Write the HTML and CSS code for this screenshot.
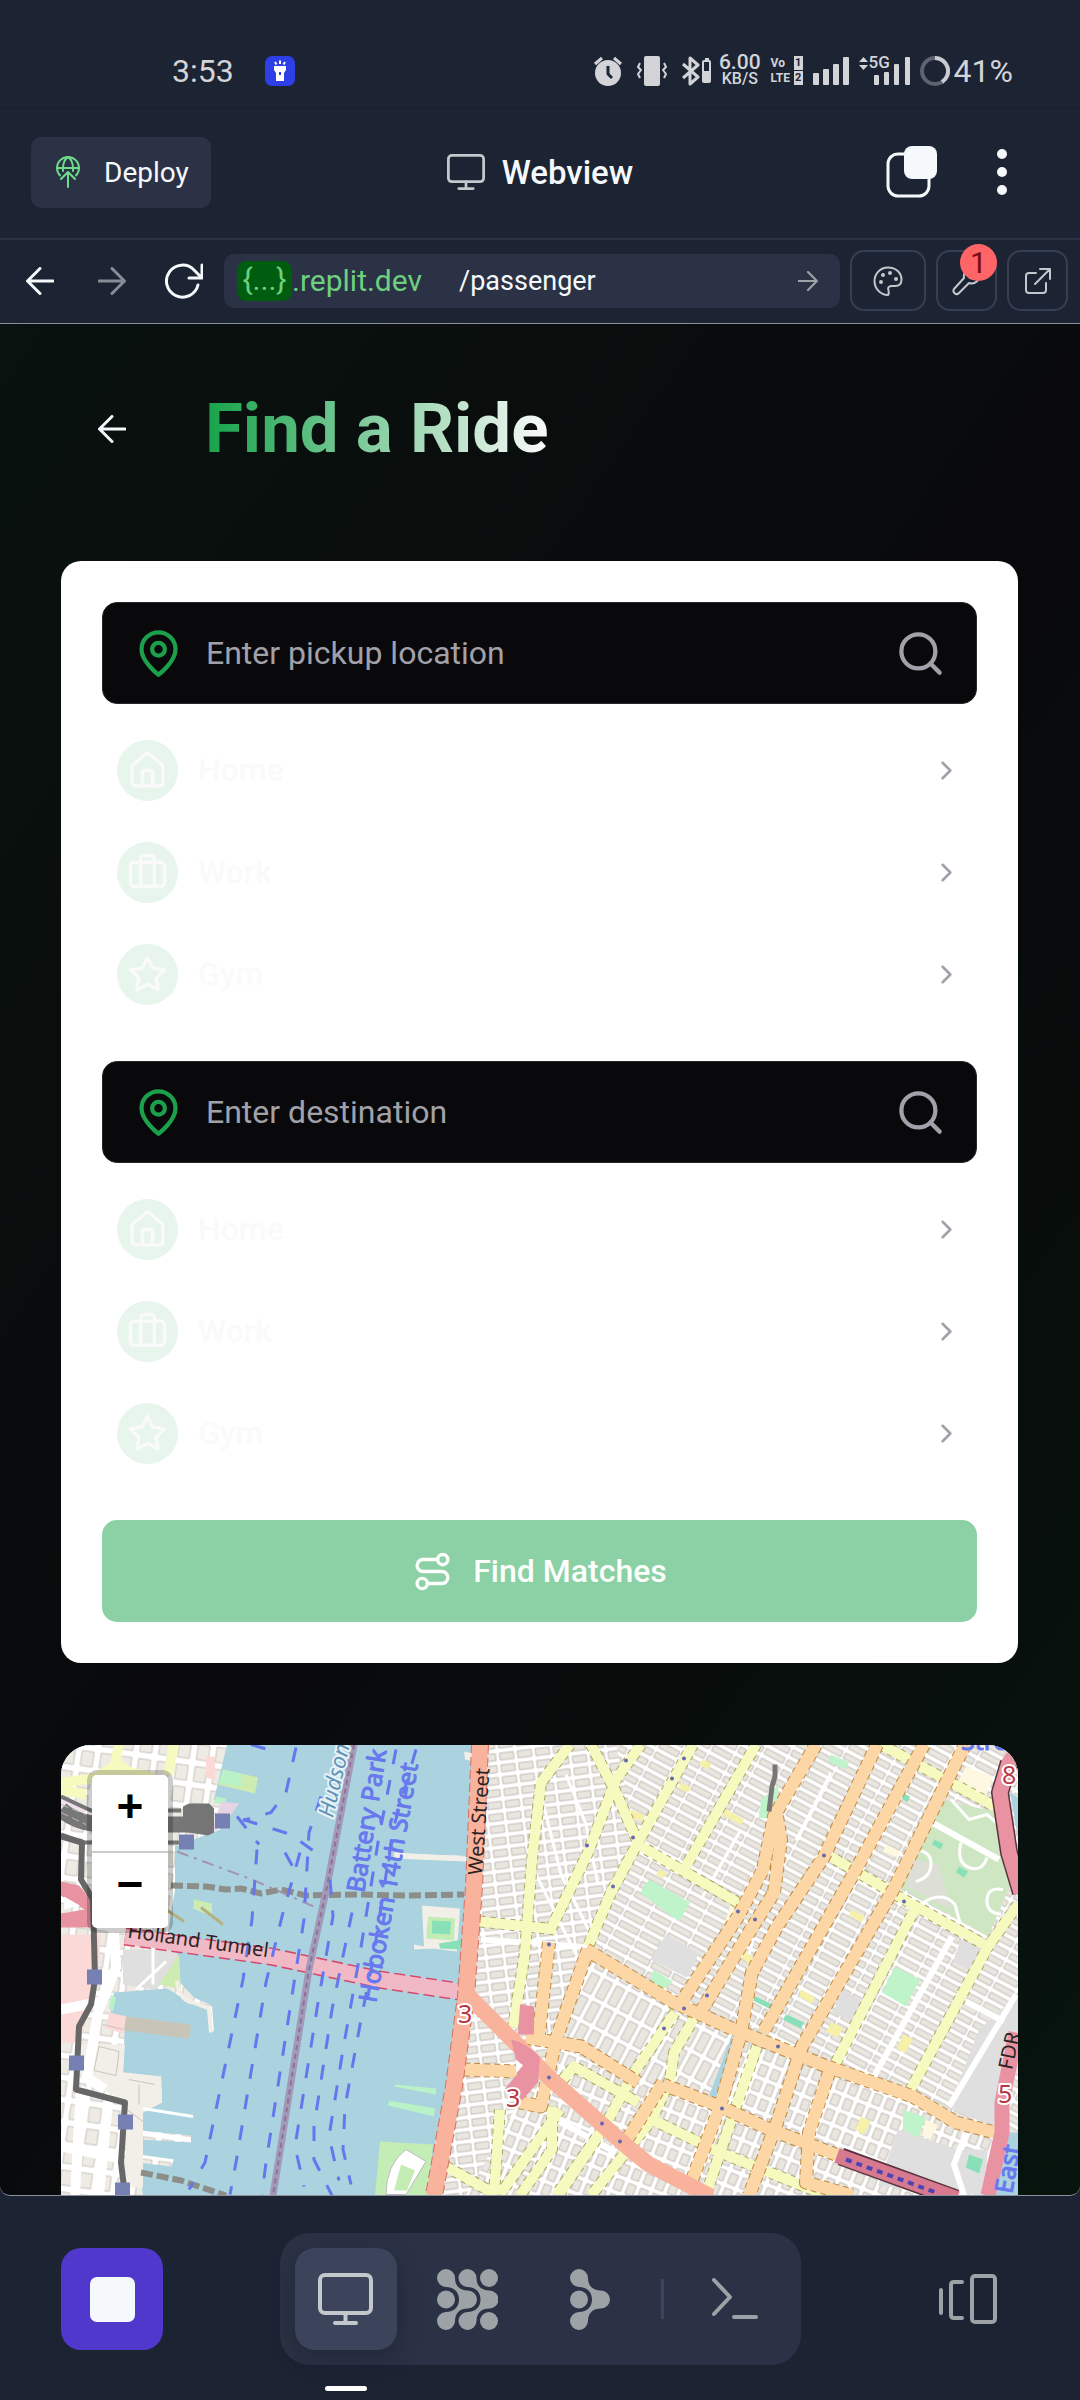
FILE: index.html
```html
<!DOCTYPE html>
<html lang="en">
<head>
<meta charset="utf-8">
<meta name="viewport" content="width=device-width, initial-scale=1">
<title>Find a Ride</title>
<link rel="stylesheet" href="styles.css">
</head>
<body>
<svg class="sprite" aria-hidden="true">
  <symbol id="i-monitor" viewBox="0 0 55 52"><rect x="2" y="2" width="51" height="38" rx="5"/><path d="M27.500 40v10M17 50h21"/></symbol>
  <symbol id="i-left" viewBox="0 0 28 28"><path d="M27 14H1.500M14 1.500 1.500 14 14 26.500"/></symbol>
  <symbol id="i-right" viewBox="0 0 28 28"><path d="M1 14h25.500M14 1.500 26.500 14 14 26.500"/></symbol>
  <symbol id="i-pin" viewBox="0 0 24 24"><path d="M20 10c0 6-8 12-8 12s-8-6-8-12a8 8 0 0 1 16 0Z"/><circle cx="12" cy="10" r="3"/></symbol>
  <symbol id="i-search" viewBox="0 0 24 24"><circle cx="11" cy="11" r="8"/><path d="m21 21-4.300-4.300"/></symbol>
  <symbol id="i-home" viewBox="0 0 24 24"><path d="M15 21v-8a1 1 0 0 0-1-1h-4a1 1 0 0 0-1 1v8"/><path d="M3 10a2 2 0 0 1 .709-1.528l7-5.999a2 2 0 0 1 2.582 0l7 5.999A2 2 0 0 1 21 10v9a2 2 0 0 1-2 2H5a2 2 0 0 1-2-2z"/></symbol>
  <symbol id="i-work" viewBox="0 0 24 24"><path d="M16 20V4a2 2 0 0 0-2-2h-4a2 2 0 0 0-2 2v16"/><rect x="2" y="6" width="20" height="14" rx="2"/></symbol>
  <symbol id="i-star" viewBox="0 0 24 24"><path d="m12 2 3.090 6.260L22 9.270l-5 4.870 1.180 6.880L12 17.770l-6.180 3.250L7 14.140 2 9.270l6.910-1.010z"/></symbol>
  <symbol id="i-chevron" viewBox="0 0 24 24"><path d="m9 18 6-6-6-6"/></symbol>
  <symbol id="i-route" viewBox="0 0 24 24"><circle cx="6" cy="19" r="3"/><path d="M9 19h8.500a3.500 3.500 0 0 0 0-7h-11a3.500 3.500 0 0 1 0-7H15"/><circle cx="18" cy="5" r="3"/></symbol>
</svg>

<div class="status">
  <div class="status-side">
    <span class="status-big">3:53</span>
    <svg class="torch" viewBox="0 0 30 30"><rect width="30" height="30" rx="7" fill="#2f3fe6"/><path d="M9 10h12v4l-2 3v8h-8v-8l-2-3z" fill="#fff"/><path d="M15 4.500v3.500M10 6l1.500 2.500M20 6l-1.500 2.500" stroke="#fff" stroke-width="2"/><path d="M15 16v3" stroke="#2f3fe6" stroke-width="2"/></svg>
  </div>
  <div class="status-side status-right">
    <svg width="28" height="30" viewBox="0 0 28 30"><circle cx="14" cy="17" r="13" fill="currentColor"/><path d="M1 8l7-6M27 8l-7-6" stroke="currentColor" stroke-width="3"/><path d="M14 10v8l4 4" stroke="#1c2333" stroke-width="3" fill="none"/></svg>
    <svg width="30" height="30" viewBox="0 0 30 30"><rect x="7" y="0" width="16" height="30" rx="2" fill="currentColor"/><path d="M3 7 1 11l3 3-3 4 2 4M27 7l2 4-3 3 3 4-2 4" stroke="currentColor" stroke-width="2" fill="none"/></svg>
    <svg width="30" height="30" viewBox="0 0 30 30"><path d="M1 8l15 13-8 7V2l8 7L1 22" stroke="currentColor" stroke-width="3" fill="none"/><rect x="21" y="5" width="7" height="21" rx="1" stroke="currentColor" stroke-width="2" fill="none"/><path d="M21 15h7v11h-7zM23 2h4v3h-4z" fill="currentColor"/></svg>
    <span class="speed"><b>6.00</b><i>KB/S</i></span>
    <span class="volte"><span>Vo<em>1</em></span><span>LTE<em>2</em></span></span>
    <svg class="filled" width="36" height="28" viewBox="0 0 36 28"><rect y="16" width="6" height="12" rx="1"/><rect x="10" y="12" width="6" height="16" rx="1"/><rect x="20" y="7" width="6" height="21" rx="1"/><rect x="30" width="6" height="28" rx="1"/></svg>
    <span class="fiveg">
      <svg class="filled" width="51" height="28" viewBox="0 0 51 28"><path d="M0 5l4.500-5L9 5zM0 8l4.500 5L9 8z"/><rect x="15" y="18" width="5" height="10" rx="1"/><rect x="25" y="15" width="5" height="13" rx="1"/><rect x="35" y="7" width="5" height="21" rx="1"/><rect x="46" width="5" height="28" rx="1"/></svg>
      <span>5G</span>
    </span>
    <svg class="ring" width="30" height="30" viewBox="0 0 30 30"><circle cx="15" cy="15" r="13" stroke="#5e636f"/><path d="M15 2a13 13 0 0 1 7 24" stroke="#c9cbd0"/></svg>
    <span class="status-big">41%</span>
  </div>
</div>

<header class="topbar">
  <button class="deploy"><svg width="24" height="32" viewBox="0 0 24 32"><path d="M4 19.500A11 11 0 1 1 20 19.500M1 12h22M12 1C8 4 7 8 7 12v3M12 1c4 3 5 7 5 11v3M12 31V17M5 23l7-7 7 7"/></svg>Deploy</button>
  <div class="webview"><svg><use href="#i-monitor"/></svg>Webview</div>
  <div class="topbar-end">
    <button aria-label="Tabs"><svg width="52" height="52" viewBox="0 0 52 52"><rect x="2" y="8" width="41" height="42" rx="10" fill="none" stroke="#f5f9fc" stroke-width="3"/><rect x="18" y="0" width="33" height="33" rx="8" fill="#f5f9fc"/></svg></button>
    <button aria-label="Menu"><svg class="filled" width="12" height="46" viewBox="0 0 12 46"><circle cx="6" cy="5" r="5"/><circle cx="6" cy="23" r="5"/><circle cx="6" cy="41" r="5"/></svg></button>
  </div>
</header>

<div class="toolbar">
  <button class="nav-btn" aria-label="Back"><svg width="28" height="28"><use href="#i-left"/></svg></button>
  <button class="nav-btn dim" aria-label="Forward"><svg width="28" height="28"><use href="#i-right"/></svg></button>
  <button class="nav-btn" aria-label="Reload"><svg width="38" height="36" viewBox="0 0 38 36"><path d="M33 22A16 16 0 1 1 29 7l7 7M37 2v13H24"/></svg></button>
  <form class="address">
    <span class="host"><span class="host-chip">{...}</span>.replit.dev</span>
    <input aria-label="Path" value="/passenger">
    <button type="button" aria-label="Go"><svg width="20" height="20"><use href="#i-right"/></svg></button>
  </form>
  <button class="tool tool-wide" aria-label="Theme"><svg width="30" height="30" viewBox="0 0 30 30"><path d="M15 29C7 29 1.500 22 1.500 15S7 1.500 15 1.500 28.500 7 28.500 13.500c0 4-2.500 6.500-6.500 6.500h-3.500c-3 0-4 2-3 4.500.5 2.500.500 4-.5 4.500z"/><g fill="currentColor" stroke="none"><circle cx="10" cy="9" r="2"/><circle cx="17" cy="7" r="2"/><circle cx="23" cy="13" r="2"/><circle cx="8" cy="16" r="2"/></g></svg></button>
  <button class="tool" aria-label="Developer tools"><svg width="30" height="30" viewBox="0 0 30 30"><path d="M19 2c-5 1-8 5-7 10L2 23c-2 3 2 7 5 4l10-10c6 2 11-3 11-9l-5 5-5-1-1-5z"/></svg><span class="badge">1</span></button>
  <button class="tool" aria-label="Open in new tab"><svg width="28" height="28" viewBox="0 0 28 28"><path d="M12 6H5a3 3 0 0 0-3 3v14a3 3 0 0 0 3 3h14a3 3 0 0 0 3-3v-7M11 17 26 2M16 2h10v10"/></svg></button>
</div>

<main class="page">
  <div class="heading">
    <button aria-label="Back"><svg width="28" height="28"><use href="#i-left"/></svg></button>
    <h1>Find a Ride</h1>
  </div>

  <section class="card">
    <div class="place">
      <label class="field"><svg class="pin"><use href="#i-pin"/></svg><input aria-label="Pickup location" placeholder="Enter pickup location"><svg class="search"><use href="#i-search"/></svg></label>
      <div class="saved">
        <button><span class="dot"><svg><use href="#i-home"/></svg></span>Home<svg class="chev"><use href="#i-chevron"/></svg></button>
        <button><span class="dot"><svg><use href="#i-work"/></svg></span>Work<svg class="chev"><use href="#i-chevron"/></svg></button>
        <button><span class="dot"><svg><use href="#i-star"/></svg></span>Gym<svg class="chev"><use href="#i-chevron"/></svg></button>
      </div>
    </div>
    <div class="place">
      <label class="field"><svg class="pin"><use href="#i-pin"/></svg><input aria-label="Destination" placeholder="Enter destination"><svg class="search"><use href="#i-search"/></svg></label>
      <div class="saved">
        <button><span class="dot"><svg><use href="#i-home"/></svg></span>Home<svg class="chev"><use href="#i-chevron"/></svg></button>
        <button><span class="dot"><svg><use href="#i-work"/></svg></span>Work<svg class="chev"><use href="#i-chevron"/></svg></button>
        <button><span class="dot"><svg><use href="#i-star"/></svg></span>Gym<svg class="chev"><use href="#i-chevron"/></svg></button>
      </div>
    </div>
    <button class="find"><svg><use href="#i-route"/></svg>Find Matches</button>
  </section>

  <section class="map" aria-label="Map">
    <svg class="tiles" viewBox="0 0 957 451" preserveAspectRatio="xMidYMid slice">
      <defs>
        <pattern id="east" width="24" height="11" patternUnits="userSpaceOnUse" patternTransform="rotate(28)"><rect width="24" height="11" fill="#fff"/><rect x="1" y="2" width="21" height="6" fill="#e9e5df" stroke="#c3beb8"/></pattern>
        <pattern id="village" width="18" height="12" patternUnits="userSpaceOnUse" patternTransform="rotate(-7)"><rect width="18" height="12" fill="#fff"/><rect x="2" y="2" width="14" height="7" fill="#e9e5df" stroke="#c3beb8"/></pattern>
        <pattern id="soho" width="14" height="25" patternUnits="userSpaceOnUse" patternTransform="rotate(28)"><rect width="14" height="25" fill="#fff"/><rect x="2" y="2" width="9" height="20" fill="#e9e5df" stroke="#c3beb8"/></pattern>
        <pattern id="lower" width="13" height="16" patternUnits="userSpaceOnUse" patternTransform="rotate(22)"><rect width="13" height="16" fill="#fff"/><rect x="2" y="2" width="8" height="11" fill="#e9e5df" stroke="#c3beb8"/></pattern>
        <pattern id="jersey" width="19" height="22" patternUnits="userSpaceOnUse" patternTransform="rotate(8)"><rect width="19" height="22" fill="#fff"/><rect x="3" y="3" width="12" height="15" fill="#eeebe5" stroke="#c9c4be"/></pattern>
      </defs>
      <rect width="957" height="451" fill="#aad3df"/>
      <!-- New Jersey shore -->
      <path fill="url(#jersey)" d="M0 0h166l-13 55 18 8-12 22-45 17v43l-7 43 11 27-2 20 17 18 18 8 2 26-5-5-2-18-20-8-20-12-53 4-4 24 15 2-2 54 38 4 1 26-19 10-2 18 50 5v7l-51-3-1 15 35 5-3 7-33-4 5 33H0z"/>
      <path fill="#fbd9d7" d="M0 190h40l-5 58-17 50H0zM48 268l18 4-3 17-18-5zM145 12h9v24l-9-3z"/>
      <path fill="#e0dfdf" d="M62 205h52l5 20-25 20-32-5z"/>
      <path fill="#f2efe9" d="M16 300h48l-2 28 38 4 1 26-19 10v75H64l2-85-46-24z"/>
      <path fill="none" stroke="#c9c4be" d="M38 302l20 5-3 24-22-5zM42 280l20 5M68 335l26 5M78 340v20M66 365l16 12"/>
      <path fill="#ceecb1" d="M162 25l35 8-3 16-37-9zM133 155l18 4v13l-19-8zM98 240l20-30 2 35z"/>
      <path fill="#b9f2c6" d="M162 25l18 4v13l-22-4zM155 52l10 2v5h-12zM50 250l5 3-3 14-4-3z"/>
      <path fill="#c8c5b8" d="M65 272l65 8-2 14-65-8z"/>
      <path fill="#e6d3e3" d="M160 57l18 2-14 20-14 10z"/>
      <path fill="none" stroke="#fff" stroke-width="10" d="M53 188l2 35-18 45-11 65 18 12M20 342l-6 108M48 350l-10 100M0 265l40-8M0 402l60 12"/>
      <path fill="none" stroke="#fff" stroke-width="3" d="M92 190v50M75 245l30-28M82 364l50 8"/>
      <path fill="none" stroke="#f2efe9" stroke-width="4" d="M116 236q2 20 16 22l16 6 2 24M360 112l40 1"/>
      <g fill="none" stroke="#f7fabf" stroke-width="10"><path d="M0 38l32-4 25-14 30 20v12M58 0l-5 25 40 8M113 0l-6 30M0 45l25 5"/></g>
      <path fill="#e892a2" d="M0 137l18 4 14 17v25H0v-14l24-4-24-14z"/>
      <path fill="#fff" d="M3 152l16 9-16 4z"/>
      <!-- rail yard and lines -->
      <path fill="#efe0ec" d="M0 50l25 12-5 16-20-8z"/>
      <g fill="none" stroke="#777"><path stroke-width="16" d="M0 65q20 18 60 15h92"/><path stroke-width="4" d="M0 52l30 14h90M0 90l22 8h100"/><path stroke="#bbb" stroke-dasharray="8 4" d="M0 60l25 10M0 68l25 12"/></g>
      <path fill="#757575" d="M122 62l6-3h20l5 5v24l-6 3-25-4z"/>
      <path fill="none" stroke="#676767" stroke-width="6" d="M0 92l21 6-1 37 12 20 2 80-4 25-12 22-3 63 49 13-4 60 4 33"/>
      <path fill="none" stroke="#8d8e89" stroke-width="6" stroke-dasharray="12 4" d="M110 141l35 1 20 3 15-1 20 5 20-4 25 6 50-1 50 1 58-1M80 428l40 8 45 15"/>
      <path fill="none" stroke="#a293b0" stroke-width="2" stroke-dasharray="12 6 3 6" d="M116 107l75 28 64 28"/>
      <path fill="none" stroke="#b5b082" stroke-width="3" d="M105 165l18 12M140 163l22 17"/>
      <!-- tunnel -->
      <g fill="none"><path stroke="#d9466c" stroke-width="18" stroke-dasharray="11 5" d="M64 192l146 20 108 23 80 12"/><path stroke="#f1b9c5" stroke-width="15" d="M64 192l146 20 108 23 80 12"/></g>
      <!-- river border and ferries -->
      <path fill="none" stroke="#a19ab9" stroke-width="7" d="M293 0l-27 142-18 83-36 226"/>
      <path fill="none" stroke="#926f98" stroke-width="2" stroke-dasharray="5 4" d="M293 0l-27 142-18 83-36 226"/>
      <g fill="none" stroke="#6677ee" stroke-width="3" stroke-dasharray="15 16">
        <path d="M235 3l-10 45-15 20-28 8"/><path d="M176 72l22 28M182 75l48 15 30 22M224 108l12 22"/>
        <path d="M196 105l-5 70-9 60-38 183-16 27"/><path d="M239 108l-18 64-16 66-30 180-6 32"/><path d="M260 52l-12 36-5 87-9 57-29 186-4 32"/>
        <path d="M269 135l3 37-15 86-23 144 9 40"/><path d="M291 168l-7 34-13 63-18 117v33l18 36"/><path d="M335 5l-17 87-20 123-16 90-14 87 10 44"/><path d="M355 5l-23 80-20 130-12 60-16 87-2 43 8 35"/>
        <path d="M190 0l20 6"/>
      </g>
      <!-- Manhattan -->
      <path fill="url(#village)" d="M410 0h150l18 100-52 100-20 110-55 141h-80l3-53 18-56 14-84 9-116z"/>
      <path fill="#f2efe9" d="M361 161l38 3-3 43-33-4zM333 108l72 4v5l-72-3zM403 7l10 2v8l-9-2zM353 200l20 4-20 1z"/>
      <path fill="#c4ecb5" d="M367 172l27 2-1 22-28-2z"/><path fill="#87e0b7" d="M371 176l19 1-1 13-18-1zM378 199l24-4-3 10-20-1z"/>
      <path fill="#b9f2c6" d="M335 340l40 4v6l-42-8zM328 356l46 8-1 8-46-11z"/>
      <path fill="#c4ecb5" d="M319 397l53 3-5 51h-53z"/><path fill="#fff" stroke="#bbb" d="M345 405l20 12-20 33h-20q0-30 20-45z"/><path fill="#c4ecb5" d="M340 420l14 6-8 20h-13z"/>
      <path fill="url(#east)" d="M555 0h402v388l-22 0-170-66-92-37-60-27-88-58 52-100z"/>
      <path fill="url(#soho)" d="M525 205l88 53 60 27-30 80-66-20-90-50z"/>
      <path fill="url(#lower)" d="M495 300l80 40 84 22 14-77 93 37 168 66-14 63H405l45-80z"/>
      <path fill="#e0dfdf" d="M605 190l33 19-12 24-37-18zM918 285l39-35v75l-24 58-45-20zM837 385l60 20 30 0-5 46-105-10zM782 245l24 15-10 20-24-12zM900 195l22 10-10 22-20-10z"/>
      <path fill="#cfe6c3" d="M877 55l57 12 15 75-22 50-89-50z"/><path fill="#dddfd6" d="M853 115l25 5 12 45-45-23z"/>
      <g fill="#bff3c9"><path d="M588 135l41 23-11 19-39-29zM834 222l25 13-14 27-24-14zM770 10l18 8-3 7-18-8zM842 365l23 8-8 20-15-8z"/><path d="M700 55l18-15-5 35-15-2zM592 225l20 12-10 8-12-8z"/></g>
      <g fill="#f6f1a9"><path d="M642 15l9 4-4 6-9-5zM620 38l10 5-3 5-10-4zM665 65l18 10-3 5-18-9zM570 65l14 6-2 6-14-4zM598 125l8 4-4 5-7-4zM725 165l8 4-4 6-7-4zM790 165l14 7-3 6-13-7zM683 205l9 8-3 8-8-8zM740 245l14 8-3 6-13-7zM770 278l12 5-5 10-12-6zM842 290l10 5-8 14-8-5zM800 372l10 5-8 13-8-5z"/></g>
      <g fill="#fdf8df"><path d="M905 22l26 10-6 20-28-15zM675 160l-15 40-3-1 13-40zM825 100l14 7-3 6-14-6zM865 375l12 6-8 14-8-4z"/></g>
      <g fill="#87e0b7"><path d="M812 92l-8 14-4-2 8-14zM843 49l6 3-3 6-5-4zM873 95l9 4-2 6-9-5zM898 122l9 5-4 6-8-5zM695 252l16 8-3 4-16-8zM725 270l18 8-3 6-18-9zM908 410l14 5-4 14-13-6z"/></g>
      <g fill="none" stroke="#fff" stroke-width="3"><path d="M850 105q20 0 20 14t-15 18M900 98q-5 20 8 25t18-10M862 158q20-12 32 2l6 22M942 145q-15-3-16 10t14 15M890 55l18 20 18-5 16 14"/></g>
      <g fill="none" stroke="#fff" stroke-width="6"><path d="M891 192l-78 140M955 250l-67 112M871 78l67 37M905 257l38 20M495 375l60 33M420 195l110 8M905 388l-12 32 10 31"/></g>
      <g fill="none" stroke="#fff" stroke-width="3"><path d="M475 130l40 80M505 30l20 50 12 60M480 50l20 80 30 60M770 28l-35 68M700 165l-12 45M680 85l-40 70"/></g>
      <!-- secondary streets -->
      <g fill="none" stroke="#a8a867" stroke-width="12" stroke-dasharray="5 5"><path d="M509 0l-29 38-9 77-7 93-12 75M530 0l25 48 22 50M580 0l-25 35-28 73-39 80M632 0l-55 98-27 50-23 54M695 0l-72 125M577 100l103 60M820 0l114 62M766 110l89 52 72 40M855 162l-82 160M957 160l-30 42-79 146M419 177l76 8M614 268l-41 60-30 55-45 67M634 272l-21 36-4 27-18 40-61 76M696 302l-37 106-14 42M591 375l68 33 107 43M502 335l11-13 64 36M541 385l-46 66M491 362v43l-32 46M385 422l50 28M439 365l-6 85M499 365l-60 85"/></g>
      <path class="yellow" d="M509 0l-29 38-9 77-7 93-12 75M530 0l25 48 22 50M580 0l-25 35-28 73-39 80M632 0l-55 98-27 50-23 54M695 0l-72 125M577 100l103 60M820 0l114 62M766 110l89 52 72 40M855 162l-82 160M957 160l-30 42-79 146M419 177l76 8M614 268l-41 60-30 55-45 67M634 272l-21 36-4 27-18 40-61 76M696 302l-37 106-14 42M591 375l68 33 107 43M502 335l11-13 64 36M541 385l-46 66M491 362v43l-32 46M385 422l50 28M439 365l-6 85M499 365l-60 85"/>
      <!-- primary streets -->
      <path fill="none" stroke="#bf8b45" stroke-width="14" stroke-dasharray="6 4" d="M525 205l88 53 60 27 93 37 86 30 43 26 39 10M527 205l-32 90-15 67-25-5M488 198l-11 100M465 293l55 9 57 36M602 340l57 22 50 23 71 27M602 338l-36 57M755 0l-42 72-11 53-25 47-57 86M716 72l4 23-7 53-25 40-47 77M816 0l-53 112-47 70-25 46-11 60-21 74-29 76M863 0l-68 125-93 163M904 0l-70 142-93 160-25 76-28 73M768 328l-20 60-3 50 46 13M403 325l54 2"/>
      <path class="orange" d="M525 205l88 53 60 27 93 37 86 30 43 26 39 10M527 205l-32 90-15 67-25-5M488 198l-11 100M465 293l55 9 57 36M602 340l57 22 50 23 71 27M602 338l-36 57M755 0l-42 72-11 53-25 47-57 86M716 72l4 23-7 53-25 40-47 77M816 0l-53 112-47 70-25 46-11 60-21 74-29 76M863 0l-68 125-93 163M904 0l-70 142-93 160-25 76-28 73M768 328l-20 60-3 50 46 13M403 325l54 2"/>
      <!-- trunk roads -->
      <g fill="none"><path stroke="#d37163" stroke-width="18" stroke-dasharray="9 4" d="M419 0l-6 142-8 110-12 90-20 109"/><path stroke="#f9b29c" stroke-width="16" d="M419 0l-6 142-8 110-12 90-20 109M408 252l50 50 30 31 78 69 22 18 62 32"/></g>
      <path fill="#e892a2" d="M459 260l14 2v28l-16 0zM450 295q15 3 29 18l-2 25-16 18-17-12 12-14-2-20z"/><path fill="#fff" d="M455 315l7 6-7 8z"/>
      <g fill="none" stroke-width="18" stroke="#59333d"><path d="M948 18l-9 30 9 60 12 40"/><path d="M780 412l115 42"/></g>
      <g fill="none" stroke-width="15" stroke="#e892a2"><path d="M955 8l-7 10-9 30 9 60 12 40M955 288l-14 70v30l-14 63"/><path stroke="#d77a90" d="M776 411l120 43"/></g>
      <path fill="none" stroke="#4d43b5" stroke-width="4" stroke-dasharray="6 5" d="M785 415l90 33"/>
      <path fill="#aad3df" d="M949 48l8 5v40zM957 390l-17 61h17z"/>
      <path fill="none" stroke="#777" stroke-width="5" d="M714 20v12l-3 10-3 25"/>
      <g fill="#656ab0"><circle cx="565" cy="16" r="2"/><circle cx="623" cy="14" r="2"/><circle cx="611" cy="34" r="2"/><circle cx="572" cy="93" r="2"/><circle cx="526" cy="101" r="2"/><circle cx="552" cy="142" r="2"/><circle cx="763" cy="111" r="2"/><circle cx="677" cy="167" r="2"/><circle cx="694" cy="175" r="2"/><circle cx="488" cy="200" r="2"/><circle cx="646" cy="251" r="2"/><circle cx="623" cy="264" r="2"/><circle cx="603" cy="284" r="2"/><circle cx="717" cy="302" r="2"/><circle cx="843" cy="157" r="2"/><circle cx="661" cy="364" r="2"/><circle cx="541" cy="379" r="2"/><circle cx="559" cy="397" r="2"/><circle cx="488" cy="333" r="2"/></g>
      <g fill="#7780b3"><path d="M154 69h15v15h-15zM118 90h15v15h-15zM26 225h15v15H26zM8 311h15v15H8zM57 370h15v15H57zM54 438h15v15H54z"/></g>
      <!-- labels -->
      <g class="labels">
        <text class="river" transform="translate(272 74) rotate(-77)">Hudson</text>
        <text class="ferry" transform="translate(303 149) rotate(-81)">Battery Park</text>
        <text class="ferry" transform="translate(315 259) rotate(-80)">Hoboken 14th Street</text>
        <text class="road" transform="translate(421 131) rotate(-86)">West Street</text>
        <text class="road" transform="translate(66 193) rotate(8)">Holland Tunnel</text>
        <text class="shield" x="397" y="278">3</text><text class="shield" x="445" y="362">3</text><text class="shield" x="941" y="39">8</text><text class="shield" x="937" y="358">5</text>
        <text class="road" transform="translate(951 326) rotate(-78)">FDR</text>
        <text class="ferry" transform="translate(951 450) rotate(-80)">East</text>
        <text class="ferry" x="900" y="5">Stre</text>
      </g>
    </svg>
    <div class="zoom"><button aria-label="Zoom in">+</button><button aria-label="Zoom out">−</button></div>
  </section>
</main>

<nav class="dock">
  <button class="stop" aria-label="Stop"><span></span></button>
  <div class="dock-group">
    <button class="active" aria-label="Webview"><svg width="55" height="52"><use href="#i-monitor"/></svg></button>
    <button aria-label="Assistant"><svg width="61" height="61" viewBox="0 0 61 61" class="filled"><g id="fork"><path d="M18 9C18 17 23 21.500 31 21.500a9 9 0 0 1 0 18C23 39.500 18 44 18 52a9 9 0 1 1-9-9C17 43 22 38 22 30.500S17 18 9 18a9 9 0 1 1 9-9z"/><circle cx="9" cy="30.500" r="9"/></g><path transform="translate(21.500)" d="M18 9C18 17 23 21.500 31 21.500a9 9 0 0 1 0 18C23 39.500 18 44 18 52a9 9 0 1 1-9-9C17 43 22 38 22 30.500S17 18 9 18a9 9 0 1 1 9-9z"/><circle cx="52" cy="9" r="9"/><circle cx="52" cy="52" r="9"/></svg></button>
    <button aria-label="Agent"><svg width="40" height="61" viewBox="0 0 40 61" class="filled"><use href="#fork"/></svg></button>
    <span class="rule"></span>
    <button aria-label="Shell"><svg width="46" height="42" viewBox="0 0 46 42"><path d="M2 2l16 17L2 36M22 39h22"/></svg></button>
  </div>
  <button aria-label="Switch pane"><svg width="58" height="50" viewBox="0 0 58 50"><path d="M2 16v23M23 8H15q-3 0-3 3v30q0 3 3 3h8"/><rect x="33" y="2" width="23" height="46" rx="3"/></svg></button>
</nav>
</body>
</html>
```
FILE: styles.css
```css
* { box-sizing: border-box; }

body {
  margin: 0;
  min-height: 100vh;
  display: flex;
  flex-direction: column;
  background: #1c2333;
  color: #f5f9fc;
  font-family: Roboto, "Liberation Sans", sans-serif;
}

button, input { font: inherit; color: inherit; background: none; border: 0; padding: 0; margin: 0; }
button { display: flex; align-items: center; justify-content: center; }
svg { display: block; flex: none; fill: none; stroke: currentColor; stroke-linecap: round; stroke-linejoin: round; }
svg.filled { fill: currentColor; stroke: none; }
.sprite { position: absolute; width: 0; height: 0; }

/* Phone status bar */
.status {
  display: flex;
  justify-content: space-between;
  height: 108px;
  padding: 34px 67px 0 172px;
  border-bottom: 1px solid #191f2d;
  color: #d3d4d8;
}
.status svg { stroke: none; stroke-linecap: butt; }
.status-side { display: flex; align-items: center; gap: 31px; }
.status-right { gap: 10px; }
.status-right > svg:nth-child(-n+2) { margin-right: 5px; }
.status-right > svg:nth-child(3) { margin-right: -3px; }
.status-right .ring { margin-right: -6px; stroke-width: 4; }
.status-big { font-size: 32px; line-height: 36px; }
.torch { width: 30px; height: 30px; }
.speed { display: flex; flex-direction: column; align-items: center; }
.speed b { font-size: 21px; line-height: 17px; font-weight: 500; }
.speed i { font-size: 16px; line-height: 16px; font-style: normal; font-weight: 500; }
.volte { display: flex; flex-direction: column; gap: 1px; width: 32px; font-size: 12px; line-height: 14px; font-weight: 700; }
.volte span { display: flex; justify-content: space-between; }
.volte em { width: 9px; font-style: normal; font-size: 11px; line-height: 14px; text-align: center; background: #d3d4d8; color: #1c2333; }
.fiveg { position: relative; }
.fiveg span { position: absolute; left: 10px; top: -3px; font-size: 17px; line-height: 17px; font-weight: 500; background: #1c2333; }

/* Workspace header */
.topbar {
  display: grid;
  grid-template-columns: 1fr auto 1fr;
  align-items: center;
  height: 130px;
  padding: 0 72px 2px 31px;
}
.deploy {
  justify-self: start;
  gap: 24px;
  height: 71px;
  padding: 0 22px 0 25px;
  border-radius: 10px;
  background: #2b3245;
  font-size: 28px;
}
.deploy svg { color: #6fdc8c; stroke-width: 2; }
.webview { display: flex; align-items: center; gap: 17px; font-size: 33px; font-weight: 500; margin-left: 41px; }
.webview svg { width: 38px; height: 36px; stroke-width: 4; color: #c2c8cc; }
.topbar-end { display: flex; justify-content: flex-end; align-items: center; gap: 58px; }
.topbar-end svg { stroke: none; }

/* Address bar */
.toolbar {
  display: flex;
  align-items: center;
  height: 86px;
  padding: 0 12px 2px 4px;
  border-top: 2px solid #2b3245;
  border-bottom: 1px solid #8d919b;
}
.nav-btn { width: 72px; height: 72px; }
.nav-btn svg { stroke-width: 3; }
.dim { color: #888c96; }
.address {
  display: flex;
  align-items: center;
  flex: 1;
  min-width: 0;
  height: 54px;
  margin-left: 4px;
  padding: 0 22px 0 13px;
  border-radius: 10px;
  background: #2b3245;
  font-size: 27px;
}
.host { display: flex; align-items: center; color: #6cd07f; font-size: 30px; }
.host-chip { width: 55px; height: 40px; line-height: 38px; text-align: center; border-radius: 9px; background: #005c0f; }
.address input { flex: 1; min-width: 0; margin-left: 37px; }
.address svg { color: #9da2a6; stroke-width: 3; }
.tool {
  position: relative;
  width: 61px;
  height: 61px;
  margin-left: 10px;
  border: 2px solid #363e54;
  border-radius: 14px;
  color: #c2c8cc;
}
.tool svg { stroke-width: 2; }
.tool-wide { width: 76px; }
.badge {
  position: absolute;
  top: -8px;
  right: -2px;
  width: 37px;
  height: 37px;
  border-radius: 50%;
  background: #ff6466;
  color: #7c0a12;
  font-size: 30px;
  line-height: 37px;
  text-align: center;
}

/* App page */
.page {
  display: flex;
  flex-direction: column;
  flex: 1;
  padding: 0 62px 0 61px;
  background: linear-gradient(125deg, #09120f 0%, #09090b 50%, #07140e 100%);
  border-bottom: 1px solid #8d919b;
  border-radius: 0 0 10px 10px;
}
.heading { display: flex; align-items: center; height: 237px; padding: 0 37px 27px; gap: 79px; }
.heading svg { stroke-width: 3; }
.heading h1 {
  margin: 0;
  font-size: 69px;
  line-height: 80px;
  font-weight: 700;
  color: transparent;
  background: linear-gradient(90deg, #16a34a, #fafafa);
  background-clip: text;
  -webkit-background-clip: text;
}
.card { display: flex; flex-direction: column; gap: 41px; padding: 41px; border-radius: 20px; background: #fff; }
.place { display: flex; flex-direction: column; gap: 20px; }
.field {
  display: flex;
  align-items: center;
  gap: 22px;
  height: 102px;
  padding: 0 30px;
  border: 1px solid #27272a;
  border-radius: 15px;
  background: #09090b;
  color: #a1a1aa;
  font-size: 32px;
}
.field input { flex: 1; min-width: 0; }
.field input::placeholder { color: #a1a1aa; opacity: 1; }
.field svg { width: 51px; height: 51px; stroke-width: 2; }
.field .pin { color: #1ca04c; }
.saved { display: flex; flex-direction: column; gap: 10px; }
.saved button { height: 92px; padding: 0 15px; justify-content: flex-start; gap: 20px; color: #fafafa; font-size: 32px; font-weight: 500; }
.dot { display: flex; align-items: center; justify-content: center; width: 61px; height: 61px; border-radius: 50%; background: #e8f5ed; }
.dot svg { width: 41px; height: 41px; stroke-width: 2; }
.chev { width: 31px; height: 31px; margin-left: auto; color: #a1a1aa; stroke-width: 2; }
.find { height: 102px; gap: 20px; border-radius: 15px; background: #8cd1a6; color: #fcfefc; font-size: 32px; font-weight: 500; }
.find svg { width: 41px; height: 41px; stroke-width: 2; }

/* Map */
.map { position: relative; flex: 1; min-height: 450px; margin-top: 82px; border-radius: 30px 30px 0 0; overflow: hidden; background: #aad3df; }
.tiles { position: absolute; inset: 0; width: 100%; height: 100%; stroke: none; stroke-linecap: butt; }
.yellow { stroke: #f7fabf; stroke-width: 10; }
.orange { stroke: #fcd6a4; stroke-width: 12; }
.labels { font-family: "Noto Sans", sans-serif; }
.river { font-size: 22px; font-style: italic; fill: #6193b8; stroke: #e6f2f7; stroke-width: 4; paint-order: stroke; }
.ferry { font-size: 25px; fill: #6878ee; stroke: #6878ee; stroke-width: 1; }
.road { font-size: 20px; fill: #2c2424; }
.shield { font-size: 25px; fill: #b53a45; stroke: #fff; stroke-width: 4; paint-order: stroke; }
.zoom { position: absolute; left: 26px; top: 25px; width: 86px; border: 5px solid rgba(0, 0, 0, 0.2); border-radius: 10px; overflow: hidden; background-clip: padding-box; }
.zoom button { width: 100%; height: 76px; padding-bottom: 14px; background: #fff; color: #000; font-family: "Liberation Sans", sans-serif; font-size: 46px; font-weight: 700; }
.zoom button + button { height: 77px; border-top: 2px solid #ccc; }

/* Bottom dock */
.dock { display: flex; justify-content: space-between; align-items: center; height: 204px; padding: 2px 61px 0; color: #9da2a6; }
.dock button { position: relative; width: 102px; height: 102px; border-radius: 20px; }
.dock svg { stroke-width: 4; }
.dock .stop { background: #5138cc; }
.stop span { width: 45px; height: 45px; border-radius: 7px; background: #f5f9fc; }
.dock-group { display: flex; align-items: center; gap: 20px; padding: 15px; border-radius: 30px; background: #2b3245; }
.dock .active { background: #3c445c; color: #c2c8cc; box-shadow: 0 8px 24px rgba(20, 25, 38, 0.4); }
.active::after { content: ""; position: absolute; left: 30px; bottom: -41px; width: 42px; height: 5px; border-radius: 3px; background: #fff; }
.rule { width: 3px; height: 40px; background: #3c445c; }
```
